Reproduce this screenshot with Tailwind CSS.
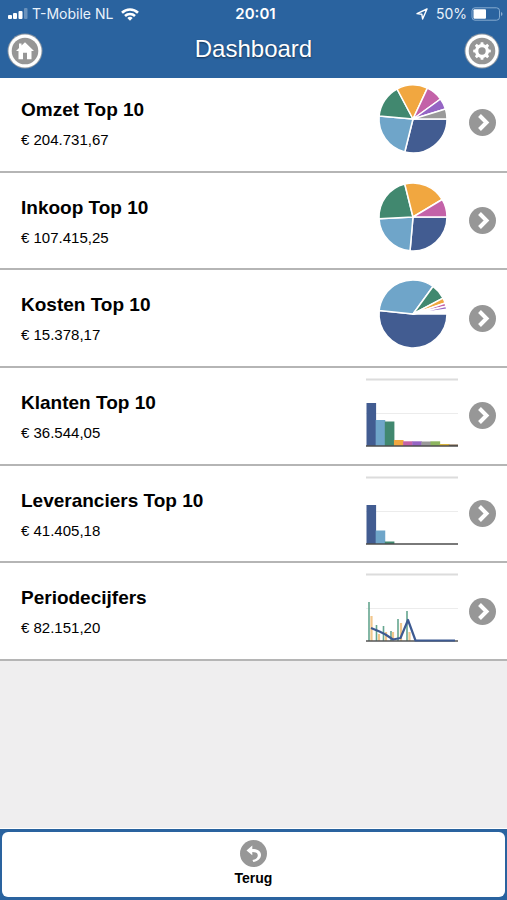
<!DOCTYPE html>
<html lang="nl">
<head>
<meta charset="utf-8">
<meta name="viewport" content="width=device-width, initial-scale=1">
<title>Dashboard</title>
<script src="https://cdn.jsdelivr.net/npm/@tailwindcss/browser@4"></script>
</head>
<body class="min-h-screen flex flex-col bg-[#efeeef] text-black font-['Liberation_Sans',Arial,sans-serif]">

<header class="relative z-10 h-[78px] shrink-0 bg-[#2a639f] text-white">
  <div class="grid grid-cols-[1fr_auto_1fr] items-center h-7 pl-2 pr-1 text-sm leading-5 font-['Inter',sans-serif] text-[#e9f2fb]">
    <div class="flex items-center gap-1">
      <svg class="w-5 h-3" viewBox="0 0 20 12" fill="#fff" aria-hidden="true">
        <rect x="0" y="7" width="4" height="4" rx="1"/><rect x="5" y="5" width="4" height="6" rx="1"/><rect x="10.500" y="3" width="4" height="8" rx="1"/><rect x="16" y="0" width="3.500" height="11" rx="1" opacity=".3"/>
      </svg>
      <span>T-Mobile NL</span>
      <svg class="w-[18px] h-[13px] ml-1" viewBox="0 0 18 13" fill="none" stroke="#fff" stroke-width="2.600" aria-hidden="true">
        <path d="M1 4.800a11.500 11.500 0 0 1 16 0M4 8a7.300 7.300 0 0 1 10 0"/><path d="M6.300 10a4 4 0 0 1 5.400 0L9 12.800z" fill="#fff" stroke="none"/>
      </svg>
    </div>
    <span class="font-semibold text-[15px] text-white">20:01</span>
    <div class="flex items-center justify-end gap-1">
      <svg class="w-3 h-3 mr-1" viewBox="0 0 12 12" fill="none" stroke="#fff" stroke-width="1.400" stroke-linejoin="round" aria-hidden="true"><path d="M11 1 1 5.600l4.800.6L6.600 11z"/></svg>
      <span>50%</span>
      <svg class="w-8 h-[14px]" viewBox="0 0 32 14" aria-hidden="true"><rect x="1" y=".8" width="27.500" height="12.400" rx="3" fill="none" stroke="#86abd0" stroke-width="1"/><rect x="2.500" y="2.300" width="12.500" height="9.400" rx="1" fill="#fff"/><path d="M30 5v4q1.500-.6 1.500-2T30 5z" fill="#86abd0"/></svg>
    </div>
  </div>
  <div class="flex items-center justify-between px-[7px] pt-[5px]">
    <button type="button" aria-label="Home" class="size-9">
      <svg class="size-9" viewBox="0 0 36 36" aria-hidden="true"><circle cx="18" cy="18" r="17.500" fill="#8c97a3"/><circle cx="18" cy="18" r="16.500" fill="#fff"/><circle cx="18" cy="18" r="13.300" fill="#969696"/><path d="M18 9.300 27 18h-2.500v8.300H20v-6.500h-4v6.500h-4.500V18H9l3-3v-4.500h2.500v2z" fill="#fff"/></svg>
    </button>
    <h1 class="text-2xl leading-8 pb-1 [text-shadow:0_1px_2px_rgba(0,0,0,0.5)]">Dashboard</h1>
    <button type="button" aria-label="Instellingen" class="size-9">
      <svg class="size-9" viewBox="0 0 36 36" aria-hidden="true"><circle cx="18" cy="18" r="17.500" fill="#8c97a3"/><circle cx="18" cy="18" r="16.500" fill="#fff"/><circle cx="18" cy="18" r="13.300" fill="#969696"/>
        <g fill="#fff"><circle cx="18" cy="18" r="7"/><g id="tooth"><path d="M16.300 12 16.700 9.200h2.600l.4 2.800zM16.300 24l.4 2.800h2.600l.4-2.800z"/></g><use href="#tooth" transform="rotate(45 18 18)"/><use href="#tooth" transform="rotate(90 18 18)"/><use href="#tooth" transform="rotate(135 18 18)"/></g><circle cx="18" cy="18" r="3.700" fill="#969696"/></svg>
    </button>
  </div>
</header>

<!-- The first row continues slightly beneath the header. -->
<main class="-mt-[3px]">
  <ul class="grid grid-rows-6 h-[586px]" id="rows">
    <li class="bg-white border-b-2 border-[#b5b5b5]"><a href="#omzet" class="flex h-full pl-[21px] pr-[11px]">
      <div class="flex-1 pt-[23px]"><h2 class="text-[19px] leading-6 font-bold">Omzet Top 10</h2><p class="mt-2 text-[15px] leading-5">€ 204.731,67</p></div>
      <svg class="w-[92px] h-[70px] mt-[10px] mr-[11px]" viewBox="0 0 92 70" data-pie="104,185,242,295,324,343,360" role="img" aria-label="Omzet"></svg></a></li>
    <li class="bg-white border-b-2 border-[#b5b5b5]"><a href="#inkoop" class="flex h-full pl-[21px] pr-[11px]">
      <div class="flex-1 pt-[23px]"><h2 class="text-[19px] leading-6 font-bold">Inkoop Top 10</h2><p class="mt-2 text-[15px] leading-5">€ 107.415,25</p></div>
      <svg class="w-[92px] h-[70px] mt-[10px] mr-[11px]" viewBox="0 0 92 70" data-pie="95,177,256,329,360" role="img" aria-label="Inkoop"></svg></a></li>
    <li class="bg-white border-b-2 border-[#b5b5b5]"><a href="#kosten" class="flex h-full pl-[21px] pr-[11px]">
      <div class="flex-1 pt-[23px]"><h2 class="text-[19px] leading-6 font-bold">Kosten Top 10</h2><p class="mt-2 text-[15px] leading-5">€ 15.378,17</p></div>
      <svg class="w-[92px] h-[70px] mt-[10px] mr-[11px]" viewBox="0 0 92 70" data-pie="186,306,332,341,347,352" role="img" aria-label="Kosten"></svg></a></li>
    <li class="bg-white border-b-2 border-[#b5b5b5]"><a href="#klanten" class="flex h-full pl-[21px] pr-[11px]">
      <div class="flex-1 pt-[23px]"><h2 class="text-[19px] leading-6 font-bold">Klanten Top 10</h2><p class="mt-2 text-[15px] leading-5">€ 36.544,05</p></div>
      <svg class="w-[92px] h-[70px] mt-[10px] mr-[11px]" viewBox="0 0 92 70" data-bars="43,26,24.5,6,4.700,4.700,4.500,4.700,2,1.500" role="img" aria-label="Klanten"></svg></a></li>
    <li class="bg-white border-b-2 border-[#b5b5b5]"><a href="#leveranciers" class="flex h-full pl-[21px] pr-[11px]">
      <div class="flex-1 pt-[23px]"><h2 class="text-[19px] leading-6 font-bold">Leveranciers Top 10</h2><p class="mt-2 text-[15px] leading-5">€ 41.405,18</p></div>
      <svg class="w-[92px] h-[70px] mt-[10px] mr-[11px]" viewBox="0 0 92 70" data-bars="39,13.500,2.500" role="img" aria-label="Leveranciers"></svg></a></li>
    <li class="bg-white border-b-2 border-[#b5b5b5]"><a href="#periode" class="flex h-full pl-[21px] pr-[11px]">
      <div class="flex-1 pt-[23px]"><h2 class="text-[19px] leading-6 font-bold">Periodecijfers</h2><p class="mt-2 text-[15px] leading-5">€ 82.151,20</p></div>
      <svg class="w-[92px] h-[70px] mt-[10px] mr-[11px]" viewBox="0 0 92 70" fill="none" role="img" aria-label="Periodecijfers">
        <path d="M0 1.500H92" stroke="#dcdcdc" stroke-width="2"/><path d="M0 35.500H92" stroke="#ececec"/>
        <path d="M3 29V68M10.500 52V68M17.500 53V68M25 58V68M32 46V68M41 38V68" stroke="#65a68f" stroke-width="1.600"/>
        <path d="M5.500 43V68M13 61V68M20 59V68M27 59V68M35 50V68M43.500 59V68" stroke="#f2c78d" stroke-width="2.200"/>
        <path d="M0 68H92" stroke="#555" stroke-width="1.600"/>
        <path d="M5 55 13.500 58.500 19.500 61.500 27 66.500 34.500 65 42 47 49.500 67.500H89" stroke="#3d5a91" stroke-width="2.200" stroke-linejoin="round"/>
      </svg></a></li>
  </ul>
</main>

<footer class="mt-auto bg-[#2a639f] border-t border-white px-[2px] pt-[3px] pb-[3px]">
  <button type="button" class="flex flex-col items-center w-full h-[65px] pt-2 rounded-md bg-white font-bold text-sm leading-5">
    <svg class="size-[27px]" viewBox="0 0 27 27" aria-hidden="true"><circle cx="13.500" cy="13.500" r="13.500" fill="#979797"/><path d="M6.500 10.500 12.300 5.500V9c5.700 0 8.700 2.500 8.700 6 0 3.800-3.500 6.500-7.700 7l-.8-1.900c3.200-.6 5.300-2.400 5.300-4.600 0-2.300-2-3.500-5.500-3.500v3.300z" fill="#fff"/></svg>
    <span class="mt-px">Terug</span>
  </button>
</footer>

<script>
const colors = ['#425c91','#6fa5c9','#41886f','#f1a740','#c362a8','#9565c4','#999999','#8db560','#d9b43c','#76583a'];
for (const svg of document.querySelectorAll('[data-pie]')) {
  const cx = 47, cy = 34, r = 34;
  const at = a => (cx + r * Math.cos(a * Math.PI / 180)) + ' ' + (cy + r * Math.sin(a * Math.PI / 180));
  let from = 0;
  svg.innerHTML = svg.dataset.pie.split(',').map((v, i) => {
    const to = +v, d = `M${cx} ${cy}L${at(from)}A${r} ${r} 0 ${to - from > 180 ? 1 : 0} 1 ${at(to)}Z`;
    from = to;
    return `<path d="${d}" fill="${colors[i]}" stroke="#fff" stroke-width="1.500" stroke-linejoin="round"/>`;
  }).join('');
}
for (const svg of document.querySelectorAll('[data-bars]')) {
  svg.innerHTML = '<path d="M0 1.500H92" stroke="#dcdcdc" stroke-width="2"/><path d="M0 35.500H92" stroke="#ececec"/>' +
    svg.dataset.bars.split(',').map((h, i) => `<rect x="${0.5 + i * 9.15}" y="${68 - h}" width="9.600" height="${h}" fill="${colors[i]}"/>`).join('') +
    '<path d="M0 68H92" stroke="#4d4d4d" stroke-width="1.600"/>';
}
for (const link of document.querySelectorAll('#rows a')) {
  link.insertAdjacentHTML('beforeend', '<svg class="size-[27px] self-center" viewBox="0 0 27 27" aria-hidden="true"><circle cx="13.500" cy="13.500" r="13.500" fill="#979797"/><path d="M10.500 6.500 17.500 13.500 10.500 20.500" fill="none" stroke="#fff" stroke-width="4"/></svg>');
}
</script>
</body>
</html>
